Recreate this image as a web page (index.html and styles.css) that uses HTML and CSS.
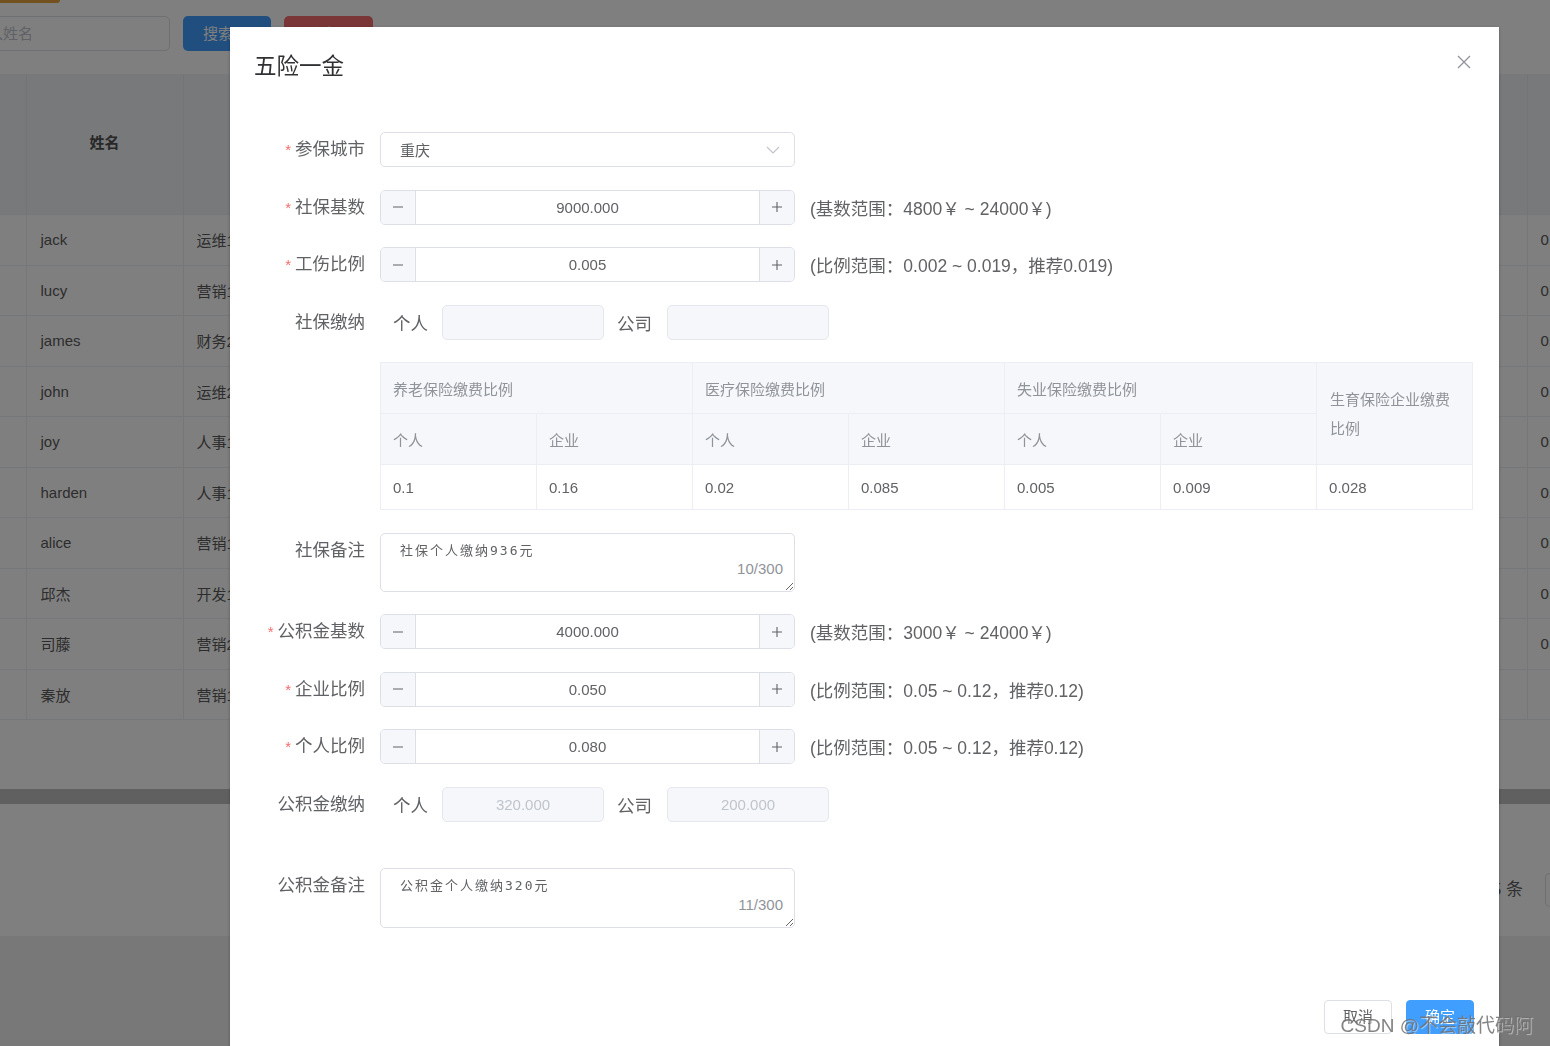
FILE: index.html
```html
<!DOCTYPE html>
<html lang="zh-CN">
<head>
<meta charset="utf-8">
<title>五险一金</title>
<link rel="stylesheet" href="styles.css">
</head>
<body>
<div class="page">
  <div class="topbar"><span class="warn-btn"></span></div>
  <div class="search-row">
    <div class="bg-input">输入姓名</div>
    <div class="bg-btn primary">搜索</div>
    <div class="bg-btn danger">删除</div>
  </div>
  <table class="bg-table">
    <colgroup><col class="c0"><col class="c1"><col class="c2"><col class="c3"></colgroup>
    <thead>
      <tr><th></th><th class="th-name">姓名</th><th></th><th></th></tr>
    </thead>
    <tbody>
      <tr><td></td><td>jack</td><td>运维1</td><td>0.</td></tr>
      <tr><td></td><td>lucy</td><td>营销1</td><td>0.</td></tr>
      <tr><td></td><td>james</td><td>财务2</td><td>0.</td></tr>
      <tr><td></td><td>john</td><td>运维2</td><td>0.</td></tr>
      <tr><td></td><td>joy</td><td>人事1</td><td>0.</td></tr>
      <tr><td></td><td>harden</td><td>人事1</td><td>0.</td></tr>
      <tr><td></td><td>alice</td><td>营销1</td><td>0.</td></tr>
      <tr><td></td><td>邱杰</td><td>开发1</td><td>0.</td></tr>
      <tr><td></td><td>司藤</td><td>营销2</td><td>0.</td></tr>
      <tr><td></td><td>秦放</td><td>营销1</td><td></td></tr>
    </tbody>
  </table>
  <div class="bg-empty"></div>
  <div class="bg-scroll"></div>
  <div class="bg-pager"><span class="pager-total">共 5 条</span><span class="pager-box"></span></div>
  <div class="bg-footer"></div>
</div>

<div class="mask"></div>

<div class="dialog-wrapper">
  <div class="dialog">
    <div class="dialog-header">
      <span class="dialog-title">五险一金</span>
      <svg class="close" width="14" height="14" viewBox="0 0 14 14"><path d="M1 1L13 13M13 1L1 13" stroke="#909399" stroke-width="1.3" fill="none"/></svg>
    </div>
    <div class="dialog-body">
      <div class="form-item">
        <div class="label req">参保城市</div>
        <div class="control">
          <div class="select"><span>重庆</span>
            <svg class="arrow" width="14" height="8" viewBox="0 0 14 8"><path d="M1 1L7 7L13 1" stroke="#c0c4cc" stroke-width="1.2" fill="none"/></svg>
          </div>
        </div>
      </div>

      <div class="form-item">
        <div class="label req">社保基数</div>
        <div class="control">
          <div class="num">
            <span class="num-btn dec"><svg width="12" height="12" viewBox="0 0 12 12"><path d="M1 6H11" stroke="#606266" stroke-width="1.1"/></svg></span>
            <span class="num-val">9000.000</span>
            <span class="num-btn inc"><svg width="12" height="12" viewBox="0 0 12 12"><path d="M1 6H11M6 1V11" stroke="#606266" stroke-width="1.1"/></svg></span>
          </div>
          <span class="hint">(基数范围：4800￥ ~ 24000￥)</span>
        </div>
      </div>

      <div class="form-item">
        <div class="label req">工伤比例</div>
        <div class="control">
          <div class="num">
            <span class="num-btn dec"><svg width="12" height="12" viewBox="0 0 12 12"><path d="M1 6H11" stroke="#606266" stroke-width="1.1"/></svg></span>
            <span class="num-val">0.005</span>
            <span class="num-btn inc"><svg width="12" height="12" viewBox="0 0 12 12"><path d="M1 6H11M6 1V11" stroke="#606266" stroke-width="1.1"/></svg></span>
          </div>
          <span class="hint">(比例范围：0.002 ~ 0.019，推荐0.019)</span>
        </div>
      </div>

      <div class="form-item">
        <div class="label">社保缴纳</div>
        <div class="control">
          <span class="sub-label first">个人</span>
          <div class="dis-input"></div>
          <span class="sub-label">公司</span>
          <div class="dis-input second"></div>
        </div>
      </div>

      <div class="form-item">
        <div class="label"></div>
        <table class="rate-table">
          <colgroup><col><col><col><col><col><col><col></colgroup>
          <tr class="hr">
            <th colspan="2">养老保险缴费比例</th>
            <th colspan="2">医疗保险缴费比例</th>
            <th colspan="2">失业保险缴费比例</th>
            <th rowspan="2" class="wrap">生育保险企业缴费比例</th>
          </tr>
          <tr class="hr">
            <th>个人</th><th>企业</th><th>个人</th><th>企业</th><th>个人</th><th>企业</th>
          </tr>
          <tr class="br">
            <td>0.1</td><td>0.16</td><td>0.02</td><td>0.085</td><td>0.005</td><td>0.009</td><td>0.028</td>
          </tr>
        </table>
      </div>

      <div class="form-item">
        <div class="label">社保备注</div>
        <div class="control top">
          <div class="ta-wrap">
            <textarea class="ta">社保个人缴纳936元</textarea>
            <span class="count">10/300</span>
          </div>
        </div>
      </div>

      <div class="form-item">
        <div class="label req">公积金基数</div>
        <div class="control">
          <div class="num">
            <span class="num-btn dec"><svg width="12" height="12" viewBox="0 0 12 12"><path d="M1 6H11" stroke="#606266" stroke-width="1.1"/></svg></span>
            <span class="num-val">4000.000</span>
            <span class="num-btn inc"><svg width="12" height="12" viewBox="0 0 12 12"><path d="M1 6H11M6 1V11" stroke="#606266" stroke-width="1.1"/></svg></span>
          </div>
          <span class="hint">(基数范围：3000￥ ~ 24000￥)</span>
        </div>
      </div>

      <div class="form-item">
        <div class="label req">企业比例</div>
        <div class="control">
          <div class="num">
            <span class="num-btn dec"><svg width="12" height="12" viewBox="0 0 12 12"><path d="M1 6H11" stroke="#606266" stroke-width="1.1"/></svg></span>
            <span class="num-val">0.050</span>
            <span class="num-btn inc"><svg width="12" height="12" viewBox="0 0 12 12"><path d="M1 6H11M6 1V11" stroke="#606266" stroke-width="1.1"/></svg></span>
          </div>
          <span class="hint">(比例范围：0.05 ~ 0.12，推荐0.12)</span>
        </div>
      </div>

      <div class="form-item">
        <div class="label req">个人比例</div>
        <div class="control">
          <div class="num">
            <span class="num-btn dec"><svg width="12" height="12" viewBox="0 0 12 12"><path d="M1 6H11" stroke="#606266" stroke-width="1.1"/></svg></span>
            <span class="num-val">0.080</span>
            <span class="num-btn inc"><svg width="12" height="12" viewBox="0 0 12 12"><path d="M1 6H11M6 1V11" stroke="#606266" stroke-width="1.1"/></svg></span>
          </div>
          <span class="hint">(比例范围：0.05 ~ 0.12，推荐0.12)</span>
        </div>
      </div>

      <div class="form-item">
        <div class="label">公积金缴纳</div>
        <div class="control">
          <span class="sub-label first">个人</span>
          <div class="dis-input">320.000</div>
          <span class="sub-label">公司</span>
          <div class="dis-input second">200.000</div>
        </div>
      </div>

      <div class="form-item spaced">
        <div class="label">公积金备注</div>
        <div class="control top">
          <div class="ta-wrap tall">
            <textarea class="ta">公积金个人缴纳320元</textarea>
            <span class="count">11/300</span>
          </div>
        </div>
      </div>
    </div>
    <div class="dialog-footer">
      <span class="btn">取消</span>
      <span class="btn primary">确定</span>
    </div>
  </div>
</div>

<div class="watermark">CSDN @不会敲代码阿</div>
</body>
</html>
```

FILE: styles.css
```css
html, body {
  margin: 0;
  padding: 0;
  width: 1550px;
  height: 1046px;
  overflow: hidden;
  background: #fff;
  font-family: "Liberation Sans", "Noto Sans CJK SC", sans-serif;
  color: #606266;
}

/* ---------- background page ---------- */
.page {
  width: 1600px;
  background: #fff;
}
.topbar {
  height: 3px;
}
.warn-btn {
  display: block;
  width: 60px;
  height: 3px;
  background: #e6a23c;
  border-radius: 0 0 5px 0;
}
.search-row {
  display: flex;
  align-items: center;
  gap: 13px;
  margin-top: 13px;
  height: 35px;
}
.bg-input {
  margin-left: -42px;
  width: 212px;
  height: 35px;
  box-sizing: border-box;
  border: 1px solid #dcdfe6;
  border-radius: 5px;
  padding-left: 14px;
  line-height: 33px;
  font-size: 15px;
  color: #c0c4cc;
}
.bg-btn {
  width: 88px;
  height: 35px;
  border-radius: 5px;
  color: #fff;
  font-size: 15px;
  line-height: 35px;
  box-sizing: border-box;
  padding-left: 20px;
}
.bg-btn.primary { background: #409eff; }
.bg-btn.danger { background: #f56c6c; width: 89px; }

.bg-table {
  margin-top: 23px;
  border-collapse: collapse;
  table-layout: fixed;
  width: 1600px;
  font-size: 15px;
}
.bg-table col.c0 { width: 26px; }
.bg-table col.c1 { width: 157px; }
.bg-table col.c2 { width: 1344px; }
.bg-table col.c3 { width: 73px; }
.bg-table th {
  height: 134px;
  background: #f0f2f5;
  border-right: 1px solid #e6e8ec;
  border-bottom: 1px solid #ebeef5;
  padding: 0 0 6px;
}
.bg-table th.th-name {
  color: #515151;
  font-weight: bold;
  text-align: center;
}
.bg-table td {
  height: 50.5px;
  padding: 0 0 0 13px;
  border-right: 1px solid #ebeef5;
  border-bottom: 1px solid #ebeef5;
  box-sizing: border-box;
  color: #5a5a5a;
}
.bg-table td:nth-child(2) { padding-left: 14px; }
.bg-empty { height: 69px; }
.bg-scroll { height: 15px; background: #c1c1c1; }
.bg-pager {
  height: 132px;
  box-sizing: border-box;
  padding-top: 69px;
  display: flex;
  justify-content: flex-end;
  align-items: flex-start;
  font-size: 17px;
  color: #606266;
}
.pager-total { margin-right: 22px; line-height: 34px; }
.pager-box {
  width: 55px;
  height: 34px;
  box-sizing: border-box;
  border: 1px solid #dcdfe6;
  border-right: none;
  border-radius: 5px 0 0 5px;
}
.bg-footer { height: 200px; background: #f0f0f0; }

/* ---------- mask + dialog ---------- */
.mask {
  position: fixed;
  inset: 0;
  background: rgba(0, 0, 0, 0.5);
}
.dialog-wrapper {
  position: fixed;
  inset: 0;
  overflow: hidden;
}
.dialog {
  margin: 27px 0 0 230px;
  width: 1269px;
  background: #fff;
  box-shadow: 0 1px 3px rgba(0, 0, 0, 0.3);
}
.dialog-header {
  display: flex;
  justify-content: space-between;
  align-items: flex-start;
  padding: 25px 25px 12.5px 25px;
}
.dialog-title {
  font-size: 22.5px;
  line-height: 30px;
  color: #303133;
  margin-left: -1px;
}
.close {
  margin-top: 3px;
  margin-right: 3px;
}
.dialog-body {
  padding: 37.5px 25px;
}
.form-item {
  display: flex;
  margin-bottom: 22.5px;
}
.form-item.spaced { margin-top: 46px; }
.label {
  width: 125px;
  flex-shrink: 0;
  box-sizing: border-box;
  padding-right: 15px;
  text-align: right;
  font-size: 17.5px;
  line-height: 35px;
  color: #606266;
}
.label.req::before {
  content: "*";
  color: #f56c6c;
  margin-right: 4px;
  font-size: 15px;
}
.control {
  display: flex;
  align-items: center;
  height: 35px;
}
.control.top {
  height: auto;
  align-items: flex-start;
}

.select {
  width: 415px;
  height: 35px;
  box-sizing: border-box;
  border: 1px solid #dcdfe6;
  border-radius: 5px;
  display: flex;
  align-items: center;
  justify-content: space-between;
  padding: 0 14px 0 19px;
  font-size: 15px;
  color: #606266;
}
.arrow { margin-top: 1px; }

.num {
  width: 415px;
  height: 35px;
  box-sizing: border-box;
  border: 1px solid #dcdfe6;
  border-radius: 5px;
  display: flex;
  overflow: hidden;
}
.num-btn {
  width: 34px;
  flex-shrink: 0;
  background: #f5f7fa;
  display: flex;
  align-items: center;
  justify-content: center;
}
.num-btn.dec { border-right: 1px solid #dcdfe6; }
.num-btn.inc { border-left: 1px solid #dcdfe6; }
.num-val {
  flex: 1;
  text-align: center;
  font-size: 15px;
  line-height: 33px;
  color: #606266;
}
.hint {
  margin-left: 15px;
  font-size: 17.5px;
  color: #606266;
  white-space: nowrap;
}

.sub-label {
  font-size: 17.5px;
  color: #606266;
  margin: 0 15px 0 13px;
}
.sub-label.first { margin-left: 13px; margin-right: 14px; }
.dis-input {
  width: 162px;
  height: 35px;
  box-sizing: border-box;
  border: 1px solid #e4e7ed;
  border-radius: 5px;
  background: #f5f7fa;
  text-align: center;
  line-height: 33px;
  font-size: 15px;
  color: #c0c4cc;
}

.rate-table {
  border-collapse: collapse;
  table-layout: fixed;
  width: 1093px;
  font-size: 15px;
}
.rate-table col { width: 156px; }
.rate-table th,
.rate-table td {
  border: 1px solid #ebeef5;
  padding: 0 12px;
  text-align: left;
  font-weight: normal;
  box-sizing: border-box;
}
.rate-table th {
  background: #f5f7fa;
  color: #909399;
}
.rate-table tr.hr { height: 51px; }
.rate-table tr.br { height: 45px; }
.rate-table td { color: #606266; }
.rate-table th.wrap {
  line-height: 29px;
  padding: 0 16px 0 13px;
}

.ta-wrap {
  position: relative;
  width: 415px;
  height: 59px;
}
.ta-wrap.tall { height: 60px; }
.ta {
  display: block;
  width: 100%;
  height: 100%;
  box-sizing: border-box;
  border: 1px solid #dcdfe6;
  border-radius: 5px;
  padding: 6px 18px 6px 19px;
  font-family: "DejaVu Sans Mono", "Noto Sans CJK SC", monospace;
  font-size: 13px;
  letter-spacing: 2px;
  line-height: 21px;
  color: #606266;
  resize: vertical;
  outline: none;
}
.count {
  position: absolute;
  right: 12px;
  bottom: 14px;
  font-size: 15px;
  line-height: 18px;
  color: #909399;
  background: #fff;
}

.dialog-footer {
  padding: 12.5px 25px 40px;
  display: flex;
  justify-content: flex-end;
  gap: 14px;
}
.btn {
  width: 68px;
  height: 34px;
  box-sizing: border-box;
  border: 1px solid #dcdfe6;
  border-radius: 4px;
  text-align: center;
  line-height: 32px;
  font-size: 15px;
  color: #606266;
  background: #fff;
}
.btn.primary {
  background: #409eff;
  border-color: #409eff;
  color: #fff;
}

.watermark {
  position: fixed;
  right: 17px;
  bottom: 8px;
  font-size: 19px;
  line-height: 24px;
  color: rgba(110, 110, 110, 0.85);
  text-shadow: 1px 1px 1px rgba(255, 255, 255, 0.5);
  white-space: nowrap;
}
```
